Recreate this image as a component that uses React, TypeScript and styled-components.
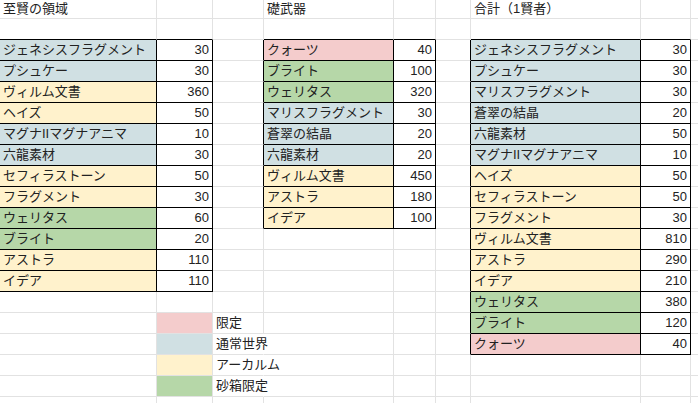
import React from 'react';
import styled, { createGlobalStyle } from 'styled-components';

const GlobalStyle = createGlobalStyle`
  html, body {
    margin: 0;
    padding: 0;
    background: #ffffff;
    overflow: hidden;
  }
`;

const GRID = '#e2e2e2';
const INK = '#000000';

const FILLS = {
  pink: '#f4cccc',
  blue: '#d0e0e3',
  yellow: '#fff2cc',
  green: '#b6d7a8',
};

type Fill = keyof typeof FILLS;

type CellData = {
  text?: string;
  fill?: Fill;
  num?: boolean;
  boxed?: boolean;
  spill?: boolean;
};

const COLS = [157, 56, 51, 130, 42, 35, 170, 50, 40];
const ROWS = 20;

const Sheet = styled.div`
  display: grid;
  grid-template-columns: ${COLS.map((w) => `${w}px`).join(' ')};
  grid-template-rows: 19px repeat(${ROWS - 1}, 21px);
  width: 698px;
  height: 403px;
  overflow: hidden;
  font-family: 'Liberation Sans', 'Noto Sans CJK JP', sans-serif;
  font-size: 13px;
  color: #222222;
`;

const Cell = styled.div<{
  $fill?: string;
  $right: string;
  $bottom: string;
  $num?: boolean;
  $title?: boolean;
}>`
  box-sizing: border-box;
  min-width: 0;
  padding: 0 3px;
  border-right: 1px solid ${(p) => p.$right};
  border-bottom: 1px solid ${(p) => p.$bottom};
  background: ${(p) => p.$fill || 'transparent'};
  line-height: ${(p) => (p.$title ? '18px' : '20px')};
  text-align: ${(p) => (p.$num ? 'right' : 'left')};
  white-space: nowrap;
  overflow: visible;
`;

const cells = new Map<string, CellData>();
const key = (r: number, c: number) => `${r}-${c}`;

function put(r: number, c: number, data: CellData) {
  cells.set(key(r, c), data);
}

function table(col: number, rows: [string, number, Fill][]) {
  rows.forEach(([name, qty, fill], i) => {
    put(i + 2, col, { text: name, fill, boxed: true });
    put(i + 2, col + 1, { text: String(qty), num: true, boxed: true });
  });
}

put(0, 0, { text: '至賢の領域' });
put(0, 3, { text: '礎武器' });
put(0, 6, { text: '合計（1賢者）' });

table(0, [
  ['ジェネシスフラグメント', 30, 'blue'],
  ['プシュケー', 30, 'blue'],
  ['ヴィルム文書', 360, 'yellow'],
  ['ヘイズ', 50, 'yellow'],
  ['マグナIIマグナアニマ', 10, 'blue'],
  ['六龍素材', 30, 'blue'],
  ['セフィラストーン', 50, 'yellow'],
  ['フラグメント', 30, 'yellow'],
  ['ウェリタス', 60, 'green'],
  ['ブライト', 20, 'green'],
  ['アストラ', 110, 'yellow'],
  ['イデア', 110, 'yellow'],
]);

table(3, [
  ['クォーツ', 40, 'pink'],
  ['ブライト', 100, 'green'],
  ['ウェリタス', 320, 'green'],
  ['マリスフラグメント', 30, 'blue'],
  ['蒼翠の結晶', 20, 'blue'],
  ['六龍素材', 20, 'blue'],
  ['ヴィルム文書', 450, 'yellow'],
  ['アストラ', 180, 'yellow'],
  ['イデア', 100, 'yellow'],
]);

table(6, [
  ['ジェネシスフラグメント', 30, 'blue'],
  ['プシュケー', 30, 'blue'],
  ['マリスフラグメント', 30, 'blue'],
  ['蒼翠の結晶', 20, 'blue'],
  ['六龍素材', 50, 'blue'],
  ['マグナIIマグナアニマ', 10, 'blue'],
  ['ヘイズ', 50, 'yellow'],
  ['セフィラストーン', 50, 'yellow'],
  ['フラグメント', 30, 'yellow'],
  ['ヴィルム文書', 810, 'yellow'],
  ['アストラ', 290, 'yellow'],
  ['イデア', 210, 'yellow'],
  ['ウェリタス', 380, 'green'],
  ['ブライト', 120, 'green'],
  ['クォーツ', 40, 'pink'],
]);

const legend: [string, Fill][] = [
  ['限定', 'pink'],
  ['通常世界', 'blue'],
  ['アーカルム', 'yellow'],
  ['砂箱限定', 'green'],
];
legend.forEach(([label, fill], i) => {
  put(15 + i, 1, { fill });
  put(15 + i, 2, { text: label, spill: label.length > 2 });
});

const boxed = (r: number, c: number) => !!cells.get(key(r, c))?.boxed;

export default function App() {
  const out: React.ReactNode[] = [];
  for (let r = 0; r < ROWS; r++) {
    for (let c = 0; c < COLS.length; c++) {
      const d = cells.get(key(r, c)) || {};
      const right = boxed(r, c) || boxed(r, c + 1) ? INK : d.spill ? 'transparent' : GRID;
      const bottom = boxed(r, c) || boxed(r + 1, c) ? INK : GRID;
      out.push(
        <Cell
          key={key(r, c)}
          $fill={d.fill ? FILLS[d.fill] : d.boxed ? '#ffffff' : undefined}
          $right={right}
          $bottom={bottom}
          $num={d.num}
          $title={r === 0}
        >
          {d.text}
        </Cell>
      );
    }
  }
  return (
    <>
      <GlobalStyle />
      <Sheet>{out}</Sheet>
    </>
  );
}
